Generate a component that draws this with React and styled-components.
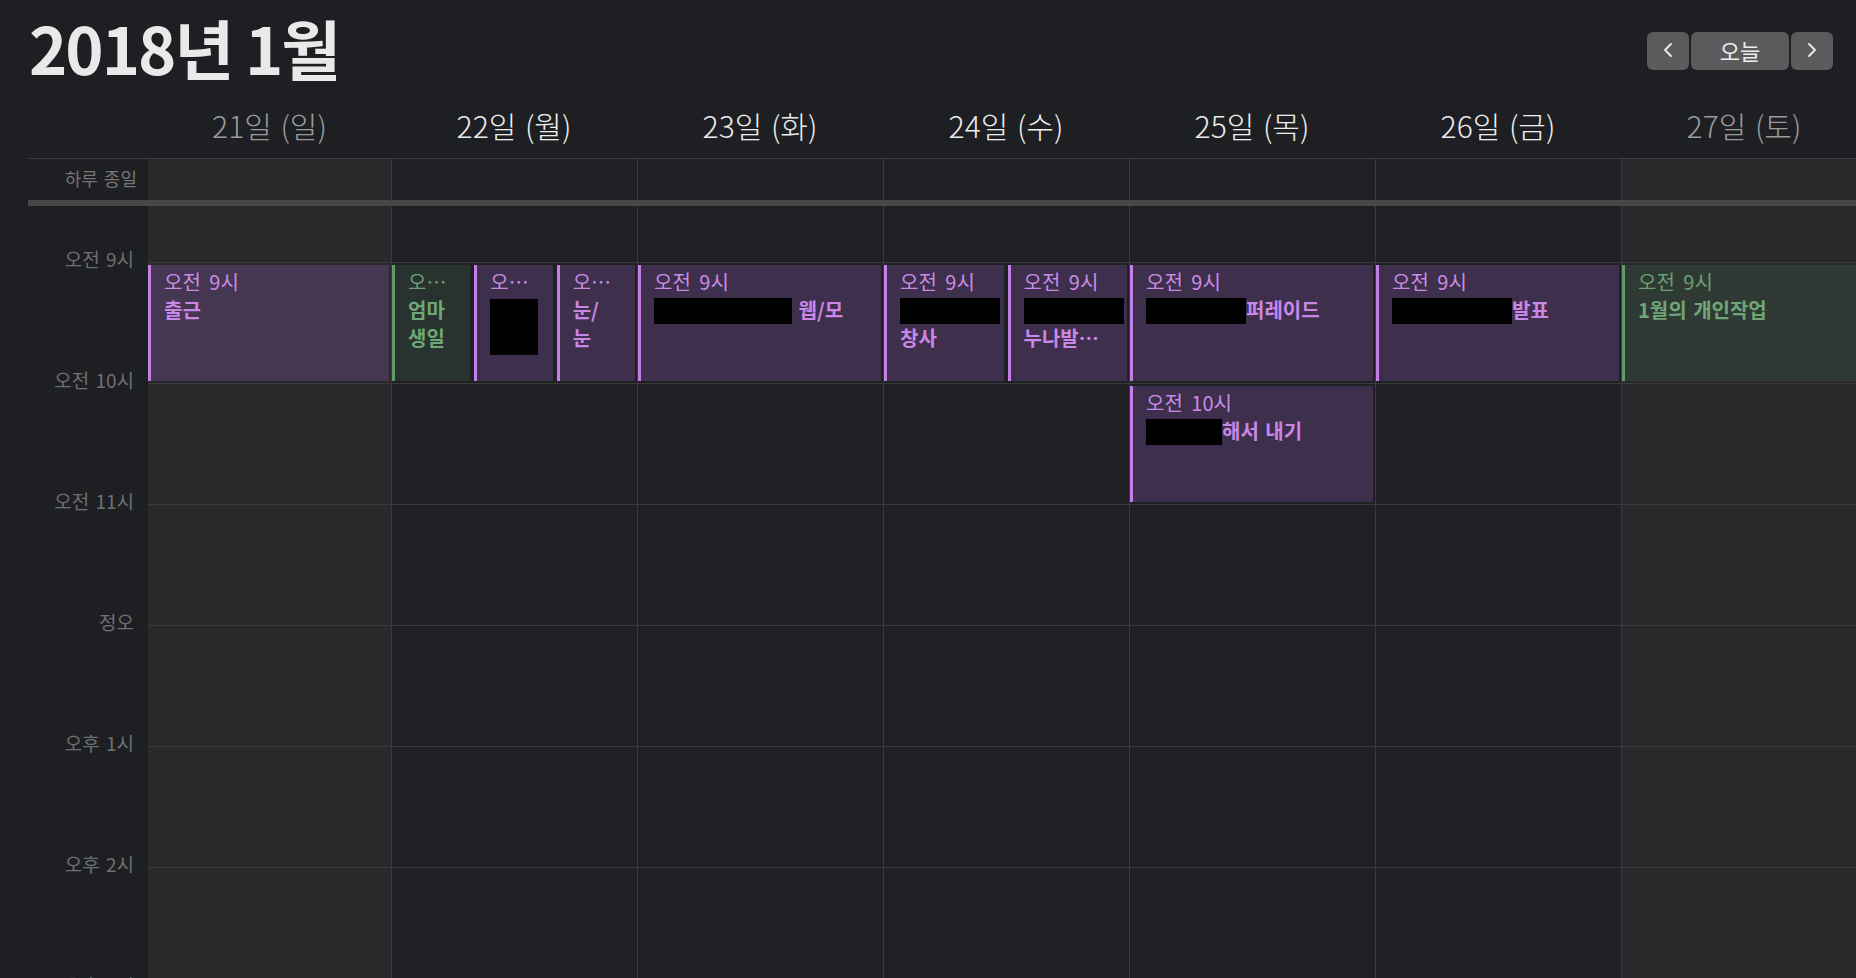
import React from "react";
import styled, { createGlobalStyle } from "styled-components";
import { ChevronLeft, ChevronRight } from "lucide-react";

const GlobalStyle = createGlobalStyle`
  * { box-sizing: border-box; }
  body {
    margin: 0;
    background: #1e1f23;
    font-family: "Noto Sans CJK KR", "Noto Sans", sans-serif;
    overflow: hidden;
  }
`;

// gutter + 7 day columns
const COLS = "120px 243px repeat(6, 246px)";
const HOURS = ["오전 9시", "오전 10시", "오전 11시", "정오", "오후 1시", "오후 2시", "오후 3시"];

const palette = {
  purple: { bg: "rgba(150, 92, 192, 0.26)", border: "#c47ee6", time: "#c98be6", title: "#c987e8" },
  green: { bg: "rgba(104, 176, 116, 0.13)", border: "#5f9a67", time: "#6b9f72", title: "#6fa677" },
};

const Page = styled.div`
  height: 978px;
  overflow: hidden;
`;

const TopBar = styled.header`
  display: flex;
  justify-content: space-between;
  align-items: flex-start;
  height: 79px;
  padding: 14px 23px 0 29px;
`;

const Title = styled.h1`
  margin: 0;
  font-size: 65px;
  line-height: 66px;
  font-weight: 700;
  letter-spacing: -2px;
  color: #e9e9e9;
`;

const NavGroup = styled.div`
  display: flex;
  gap: 2px;
  margin-top: 18px;
`;

const NavButton = styled.button`
  width: ${(p) => (p.$wide ? "98px" : "42px")};
  height: 38px;
  padding: 0 0 2px;
  display: flex;
  align-items: center;
  justify-content: center;
  border: none;
  border-radius: 6px;
  background: #5b5b5e;
  color: #ececec;
  font-family: inherit;
  font-size: 22px;
`;

const Calendar = styled.div`
  margin-left: 28px;
  overflow: hidden;
`;

const Row = styled.div`
  display: grid;
  grid-template-columns: ${COLS};
`;

const HeaderRow = styled(Row)`
  height: 79px;
`;

const DayName = styled.div`
  padding-top: 31px;
  text-align: center;
  font-size: 30px;
  line-height: 30px;
  font-weight: 300;
  word-spacing: 2px;
  white-space: nowrap;
  color: ${(p) => (p.$weekend ? "#9b9b9b" : "#ececec")};
`;

const AllDayRow = styled(Row)`
  height: 48px;
  border-top: 1px solid #3c3c3e;
  border-bottom: 6px solid #47474a;
`;

const AllDayLabel = styled.div`
  padding-right: 11px;
  text-align: right;
  font-size: 18px;
  line-height: 39px;
  word-spacing: 2px;
  color: #767676;
`;

const DayCell = styled.div`
  background: ${(p) => (p.$weekend ? "#29292b" : "#1f2024")};
  border-left: ${(p) => (p.$first ? "none" : "1px solid #3a3a3c")};
`;

const Body = styled(Row)`
  height: 772px;
`;

const Gutter = styled.div`
  padding-top: 42px;
`;

const TimeLabel = styled.div`
  height: 121px;
  padding-right: 14px;
  text-align: right;
  font-size: 19px;
  line-height: 22px;
  word-spacing: 2px;
  color: #6f6f6f;
`;

const DayColumn = styled(DayCell)`
  display: flex;
  flex-direction: column;
`;

const LeadSlot = styled.div`
  height: 56px;
  flex-shrink: 0;
`;

const HourSlot = styled.div`
  height: 121px;
  flex-shrink: 0;
  display: flex;
  gap: 4px;
  padding: 2px 2px 2px 0;
  border-top: 1px solid #3a3a3c;
`;

const Event = styled.div`
  flex: 1;
  min-width: 0;
  padding: 3px 6px 0 13px;
  overflow: hidden;
  background: ${(p) => palette[p.$tone].bg};
  border-left: 3px solid ${(p) => palette[p.$tone].border};
  font-size: 20px;
  line-height: 28px;
`;

const EventTime = styled.div`
  white-space: nowrap;
  word-spacing: 4px;
  color: ${(p) => palette[p.$tone].time};
`;

const EventTitle = styled.div`
  font-weight: 700;
  word-spacing: 2px;
  color: ${(p) => palette[p.$tone].title};
`;

const Redacted = styled.span`
  display: ${(p) => (p.$block ? "block" : "inline-block")};
  width: ${(p) => p.$w}px;
  height: ${(p) => p.$h || 26}px;
  margin-top: ${(p) => (p.$block ? "3px" : "0")};
  vertical-align: -6px;
  background: #000;
`;

const days = [
  {
    label: "21일 (일)",
    weekend: true,
    slots: { 0: [{ tone: "purple", time: "오전 9시", title: "출근" }] },
  },
  {
    label: "22일 (월)",
    slots: {
      0: [
        { tone: "green", time: "오…", title: "엄마 생일" },
        { tone: "purple", time: "오…", title: <Redacted $block $w={48} $h={56} /> },
        { tone: "purple", time: "오…", title: <>눈/<br />눈</> },
      ],
    },
  },
  {
    label: "23일 (화)",
    slots: {
      0: [{ tone: "purple", time: "오전 9시", title: <><Redacted $w={138} /> 웹/모</> }],
    },
  },
  {
    label: "24일 (수)",
    slots: {
      0: [
        { tone: "purple", time: "오전 9시", title: <><Redacted $w={100} />창사</> },
        { tone: "purple", time: "오전 9시", title: <><Redacted $w={100} />누나발…</> },
      ],
    },
  },
  {
    label: "25일 (목)",
    slots: {
      0: [{ tone: "purple", time: "오전 9시", title: <><Redacted $w={100} />퍼레이드</> }],
      1: [{ tone: "purple", time: "오전 10시", title: <><Redacted $w={76} />해서 내기</> }],
    },
  },
  {
    label: "26일 (금)",
    slots: {
      0: [{ tone: "purple", time: "오전 9시", title: <><Redacted $w={120} />발표</> }],
    },
  },
  {
    label: "27일 (토)",
    weekend: true,
    slots: { 0: [{ tone: "green", time: "오전 9시", title: "1월의 개인작업" }] },
  },
];

export default function App() {
  return (
    <Page>
      <GlobalStyle />
      <TopBar>
        <Title>2018년 1월</Title>
        <NavGroup>
          <NavButton>
            <ChevronLeft size={24} strokeWidth={1.8} />
          </NavButton>
          <NavButton $wide>오늘</NavButton>
          <NavButton>
            <ChevronRight size={24} strokeWidth={1.8} />
          </NavButton>
        </NavGroup>
      </TopBar>

      <Calendar>
        <HeaderRow>
          <div />
          {days.map((d) => (
            <DayName key={d.label} $weekend={d.weekend}>
              {d.label}
            </DayName>
          ))}
        </HeaderRow>

        <AllDayRow>
          <AllDayLabel>하루 종일</AllDayLabel>
          {days.map((d, i) => (
            <DayCell key={d.label} $weekend={d.weekend} $first={i === 0} />
          ))}
        </AllDayRow>

        <Body>
          <Gutter>
            {HOURS.map((h) => (
              <TimeLabel key={h}>{h}</TimeLabel>
            ))}
          </Gutter>
          {days.map((d, i) => (
            <DayColumn key={d.label} $weekend={d.weekend} $first={i === 0}>
              <LeadSlot />
              {HOURS.map((h, hi) => (
                <HourSlot key={h}>
                  {(d.slots[hi] || []).map((ev, ei) => (
                    <Event key={ei} $tone={ev.tone}>
                      <EventTime $tone={ev.tone}>{ev.time}</EventTime>
                      <EventTitle $tone={ev.tone}>{ev.title}</EventTitle>
                    </Event>
                  ))}
                </HourSlot>
              ))}
            </DayColumn>
          ))}
        </Body>
      </Calendar>
    </Page>
  );
}
